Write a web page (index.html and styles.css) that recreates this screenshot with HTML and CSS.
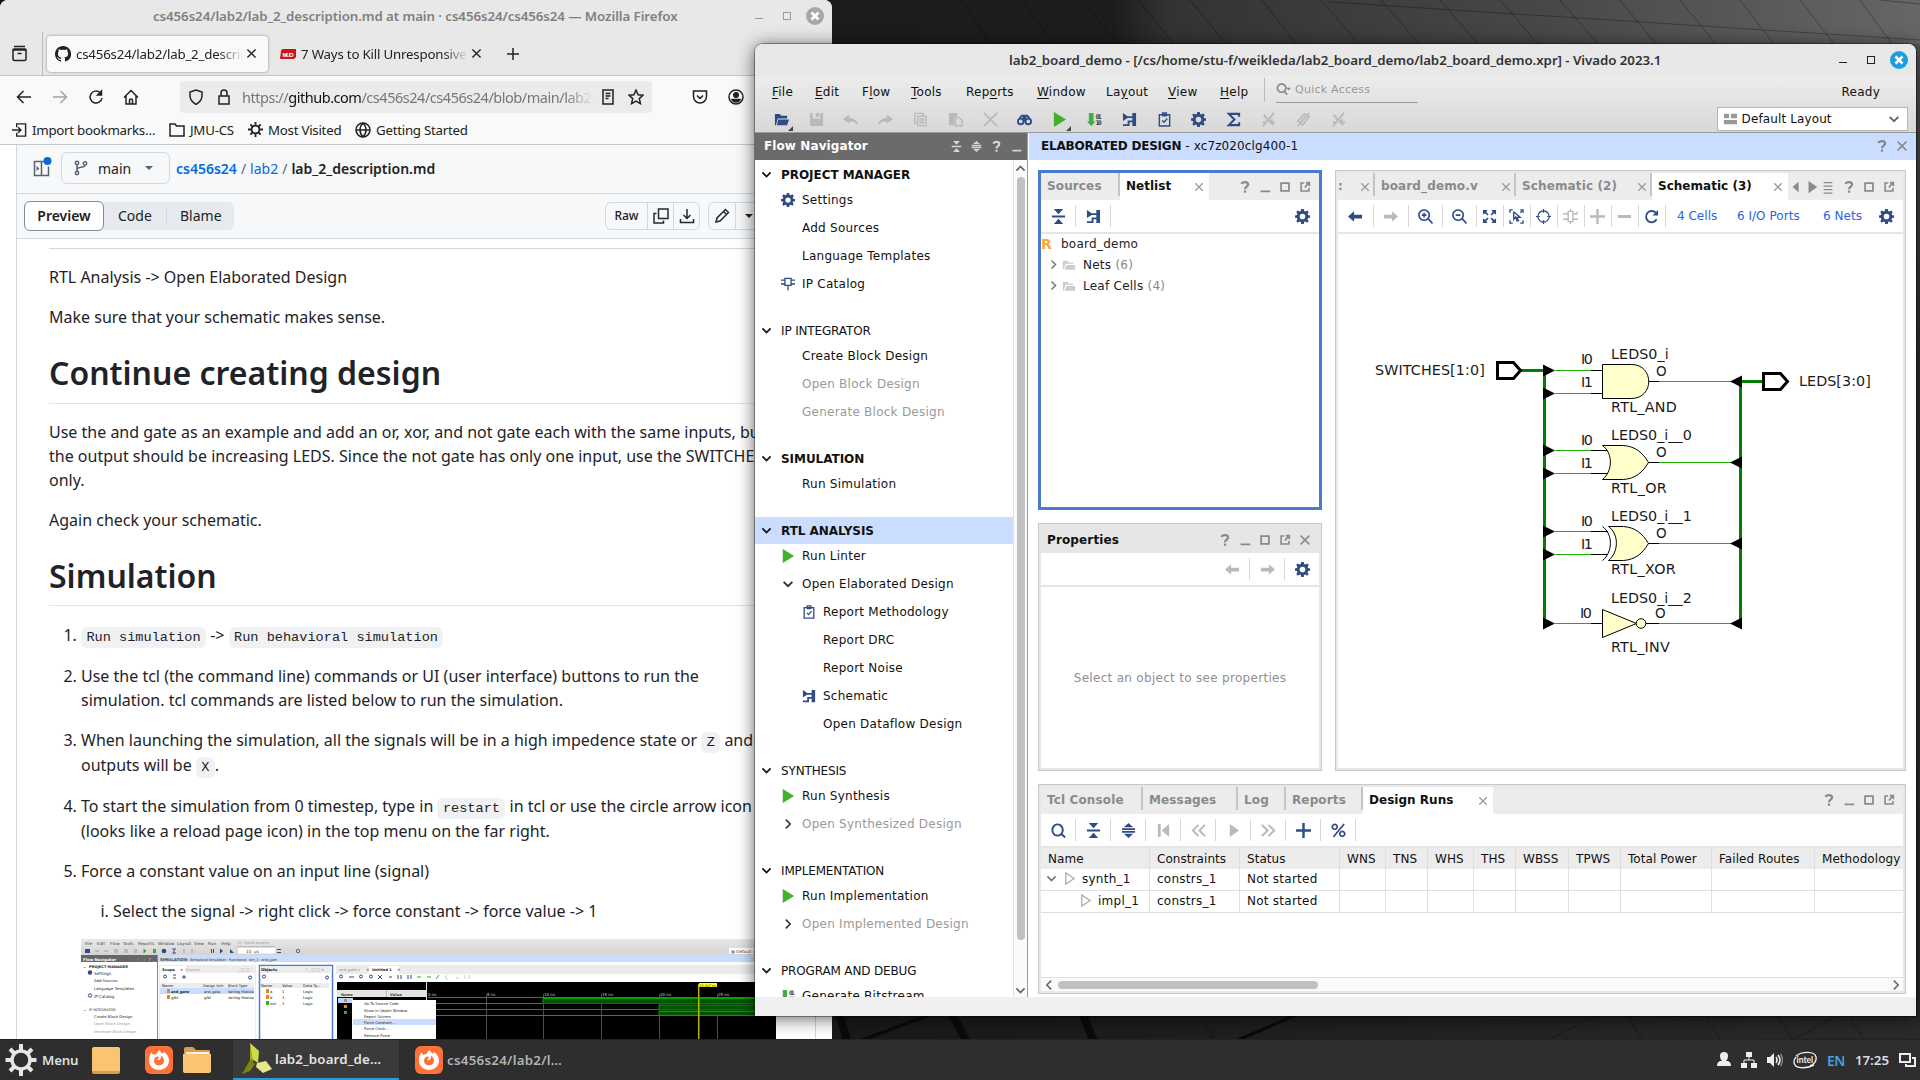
FILE: index.html
```html
<!DOCTYPE html>
<html lang="en">
<head>
<meta charset="utf-8">
<title>Desktop</title>
<link rel="stylesheet" href="styles.css">
</head>
<body>
<svg class="defs" aria-hidden="true">
  <symbol id="gear" viewBox="0 0 16 16"><path fill="currentColor" fill-rule="evenodd" d="M6.6 0h2.8l.4 2.2 1.3.5L13 1.500l1.700 1.800-1.300 1.900.5 1.300 2.100.3v2.500l-2.100.4-.5 1.400 1.200 1.800-1.700 1.700-1.900-1.200-1.300.5L9.400 16H6.600l-.4-2.100-1.300-.5L3 14.600l-1.700-1.700 1.200-1.800L2 9.700l-2-.4V6.800l2-.3.6-1.300-1.300-1.900L3 1.500l1.900 1.200 1.300-.5zM8 5a3 3 0 1 0 0 6 3 3 0 0 0 0-6z"/></symbol>
  <symbol id="open" viewBox="0 0 16 16"><path fill="currentColor" d="M1 2h5l2 2h6v3H4L2 14H1zM4.500 8H16l-2 6H3z"/></symbol>
  <symbol id="save" viewBox="0 0 16 16"><path fill="currentColor" d="M1 1h3v6h8V1h3v14H1zM7 1h4v4H7z"/></symbol>
  <symbol id="undo" viewBox="0 0 16 16"><path fill="currentColor" d="M0 7.500 6.500 3v3C12 6 15 9 16 14c-3-3-5-4-9.500-4v2.500z"/></symbol>
  <symbol id="redo" viewBox="0 0 16 16"><path fill="currentColor" d="M16 7.500 9.500 3v3C4 6 1 9 0 14c3-3 5-4 9.500-4v2.500z"/></symbol>
  <symbol id="copydoc" viewBox="0 0 16 16"><path fill="none" stroke="currentColor" stroke-width="1.500" d="M4 12H2V1.500h9V4M5 4.500h9v10H5zM7 7.500h5M7 9.500h5M7 11.500h5"/></symbol>
  <symbol id="paste" viewBox="0 0 16 16"><path fill="currentColor" d="M1 1h9v4H7v9H1z"/><path fill="none" stroke="currentColor" stroke-width="1.500" d="M8 6h4l3 3v6H8z"/></symbol>
  <symbol id="xbig" viewBox="0 0 16 16"><path fill="none" stroke="currentColor" stroke-width="2" d="M1 1l14 14M15 1 1 15"/></symbol>
  <symbol id="binoc" viewBox="0 0 16 16"><g fill="none" stroke="currentColor" stroke-width="2"><circle cx="4" cy="10" r="3"/><circle cx="12" cy="10" r="3"/><path d="M2.500 7 5 4h2v6M13.500 7 11 4H9v6"/></g></symbol>
  <symbol id="play" viewBox="0 0 16 16"><path fill="#41b12c" d="M2 0v16l13-8z"/></symbol>
  <symbol id="bits" viewBox="0 0 16 16"><path fill="#3fae49" d="M2 1h5v9h2l-4.500 5L0 10h2z"/><text x="9" y="7" font-family="DejaVu Sans Mono" font-size="7" font-weight="700" textLength="7" fill="#444">01</text><text x="9" y="14" font-family="DejaVu Sans Mono" font-size="7" font-weight="700" textLength="7" fill="#444">10</text></symbol>
  <symbol id="schem" viewBox="0 0 16 16"><path fill="currentColor" d="M1 1l5 3.500h5V1h4v14h-4v-4H8v4H1v-2h5V9h5V6.500H6L1 9.500z"/></symbol>
  <symbol id="clip" viewBox="0 0 16 16"><path fill="none" stroke="currentColor" stroke-width="1.500" d="M2.500 3h11v12h-11zM6 1h4v3H6z"/><path fill="none" stroke="currentColor" stroke-width="1.500" d="M5.500 9l2 2 3.500-4"/></symbol>
  <symbol id="sigma" viewBox="0 0 16 16"><path fill="none" stroke="currentColor" stroke-width="2.200" d="M14 5V2H3l6 6-6 6h11v-3"/></symbol>
  <symbol id="off" viewBox="0 0 16 16"><path fill="none" stroke="currentColor" stroke-width="2.200" d="M14 1 2 15M3 3l4 5M9 9l4 5M2 11h4M12 8l-2 3h5"/></symbol>
  <symbol id="clips" viewBox="0 0 16 16"><path fill="none" stroke="currentColor" stroke-width="1.700" d="M14 1 2 15M2 10 9 2l5 3-7 9zM5 11l5-6"/></symbol>
  <symbol id="collapse" viewBox="0 0 16 16"><path fill="currentColor" d="M3 0h10L8 5.500zM1 7h14v2H1zM3 16h10l-5-5.500z"/></symbol>
  <symbol id="expand" viewBox="0 0 16 16"><path fill="currentColor" d="M8 0l5 4.500H3zM1 5.500h14v2H1zM1 8.500h14v2H1zM3 11.500h10L8 16z"/></symbol>
  <symbol id="help" viewBox="0 0 16 16"><path fill="none" stroke="currentColor" stroke-width="2.600" d="M4 4.500C5 1.500 11.500 1.500 11.500 5 11.500 7.500 8 7.500 8 10.500M8 12v2.500"/></symbol>
  <symbol id="min" viewBox="0 0 16 16"><path fill="currentColor" d="M3 12h11v2H3z"/></symbol>
  <symbol id="max" viewBox="0 0 16 16"><path fill="none" stroke="currentColor" stroke-width="2" d="M3.500 3.500h9v9h-9z"/></symbol>
  <symbol id="float" viewBox="0 0 16 16"><path fill="none" stroke="currentColor" stroke-width="1.800" d="M7 3.500H3.500v9h9V9M8 8.500l4-5M9 3h4v4"/></symbol>
  <symbol id="close" viewBox="0 0 16 16"><path fill="none" stroke="currentColor" stroke-width="1.700" d="M3 3l10 10M13 3 3 13"/></symbol>
  <symbol id="arrL" viewBox="0 0 16 16"><path fill="currentColor" d="M0 8l6.500-5.500V6H15v4H6.500v3.500z"/></symbol>
  <symbol id="arrR" viewBox="0 0 16 16"><path fill="currentColor" d="M16 8 9.500 2.500V6H1v4h8.500v3.500z"/></symbol>
  <symbol id="chevD" viewBox="0 0 16 16"><path fill="none" stroke="currentColor" stroke-width="2.200" d="M3 5.500l5 5 5-5"/></symbol>
  <symbol id="chevR" viewBox="0 0 16 16"><path fill="none" stroke="currentColor" stroke-width="1.800" d="M5.500 3l5 5-5 5"/></symbol>
  <symbol id="chip" viewBox="0 0 16 16"><path fill="none" stroke="currentColor" stroke-width="1.500" d="M4.500 1.500h7v8h-7zM0 3.500h4M12 3.500h4M0 8h4M12 8h4M8 10v5"/></symbol>
  <symbol id="folderO" viewBox="0 0 16 16"><path fill="currentColor" d="M1 3h5l1.500 2H13v1.500H4L2 13H1zM5 8h10v5.500H3z"/></symbol>
  <symbol id="zin" viewBox="0 0 16 16"><path fill="none" stroke="currentColor" stroke-width="1.700" d="M6.500 1a5.500 5.500 0 1 0 .01 0M11 10.500l4.500 5M4 6.500h5M6.500 4v5"/></symbol>
  <symbol id="zout" viewBox="0 0 16 16"><path fill="none" stroke="currentColor" stroke-width="1.700" d="M6.500 1a5.500 5.500 0 1 0 .01 0M11 10.500l4.500 5M4 6.500h5"/></symbol>
  <symbol id="mag" viewBox="0 0 16 16"><path fill="none" stroke="currentColor" stroke-width="2" d="M7 1.500a5.500 6 0 1 0 .01 0M11 11.500l4 4"/></symbol>
  <symbol id="fit" viewBox="0 0 16 16"><path fill="currentColor" d="M1 1h5L4.500 3l2.500 3-1 1-3-2.500L1 6zM15 1v5l-2-1.500L10 7 9 6l2.500-3L10 1zM1 15v-5l2 1.500L6 9l1 1-2.500 3L6 15zM15 15h-5l1.500-2L9 10l1-1 3 2.500 2-1.500z"/></symbol>
  <symbol id="selz" viewBox="0 0 16 16"><path fill="none" stroke="currentColor" stroke-width="1.400" d="M1 4V1h3M12 1h3v3M15 12v3h-3M4 15H1v-3M5 3l7 6H8.500l2 4M5 3v8l2-2.500 2 5M12 4l2-2"/></symbol>
  <symbol id="target" viewBox="0 0 16 16"><path fill="none" stroke="currentColor" stroke-width="1.300" d="M8 2a6 6 0 1 0 .01 0M8 0v4M8 12v4M0 8h4M12 8h4"/></symbol>
  <symbol id="chip2" viewBox="0 0 16 16"><path fill="none" stroke="currentColor" stroke-width="1.500" d="M5.500 2.500h5v11h-5zM0 5h5M11 5h4V3M0 11h5M11 11h5M8 0v2M8 14v2"/></symbol>
  <symbol id="plus" viewBox="0 0 16 16"><path fill="none" stroke="currentColor" stroke-width="2.600" d="M8 0v16M0 8h16"/></symbol>
  <symbol id="minus" viewBox="0 0 16 16"><path fill="none" stroke="currentColor" stroke-width="3" d="M1 8h14"/></symbol>
  <symbol id="reload" viewBox="0 0 16 16"><path fill="none" stroke="currentColor" stroke-width="2" d="M13.500 11A6 6 0 1 1 13 4.500"/><path fill="currentColor" d="M15 1v6H9z"/></symbol>
  <symbol id="lines" viewBox="0 0 16 16"><path fill="none" stroke="currentColor" stroke-width="1.700" d="M3 3h10M3 7h10M3 11h10M3 15h10"/></symbol>
  <symbol id="triL" viewBox="0 0 16 16"><path fill="currentColor" d="M11 2v12L4 8z"/></symbol>
  <symbol id="triR" viewBox="0 0 16 16"><path fill="currentColor" d="M4 1v14l10-7z"/></symbol>
  <symbol id="first" viewBox="0 0 16 16"><path fill="currentColor" d="M2 1h3v14H2zM14 1v14L6 8z"/></symbol>
  <symbol id="rew" viewBox="0 0 16 16"><path fill="none" stroke="currentColor" stroke-width="2.200" d="M8 2 2 8l6 6M15 2 9 8l6 6"/></symbol>
  <symbol id="fwd" viewBox="0 0 16 16"><path fill="none" stroke="currentColor" stroke-width="2.200" d="M1 2l6 6-6 6M8 2l6 6-6 6"/></symbol>
  <symbol id="triO" viewBox="0 0 16 16"><path fill="none" stroke="currentColor" stroke-width="1.300" d="M4 2v12l9-6z"/></symbol>
  <symbol id="pct" viewBox="0 0 16 16"><path fill="none" stroke="currentColor" stroke-width="1.800" d="M14 1 2.500 15M4 1.500a2.600 2.600 0 1 0 .01 0M12 9a2.600 2.600 0 1 0 .01 0"/></symbol>
  <symbol id="layout" viewBox="0 0 16 16"><path fill="currentColor" d="M1 2h6v5H1zM9 2h7v5H9zM1 9h15v5H1z"/></symbol>
  <symbol id="ff" viewBox="0 0 28 28"><rect width="28" height="28" rx="6" fill="#ff7139"/><path fill="#fff" fill-rule="evenodd" d="M4 14.500c0-3 .7-5.500 2.300-8L8.500 9c1-.8 2-1 3-1 .8-1.800 2-3.200 3.500-4 .2 1.800 1.500 3 3.500 4V5.500c3.500 2.300 5.500 5.500 5.500 9 0 5.500-4.500 9.500-10 9.500S4 20 4 14.500zM13 10.500c-2 0-4 1.500-4 4.300 0 2.700 2.200 4.700 5 4.700s5-2 5-4.700c0-2.500-1.500-4.300-3.500-5.300.8 1.500.5 3-.5 4-1 .8-2.500.6-3-.2 1-.3 1.500-.8 2-1.500z"/></symbol>
  <symbol id="file" viewBox="0 0 28 28"><path fill="#dd9c49" d="M1 3q0-2 2-2h7l3 3h13q1 0 1 2v4H1z"/><path fill="#f4f4f0" d="M3 6h23v4H3z"/><path fill="#f9c573" d="M0 8h28v17q0 2-2 2H2q-2 0-2-2z"/></symbol>
</svg>

<div class="desktop">
  <svg class="wallpaper" viewBox="0 0 1920 1080">
    <defs>
      <linearGradient id="wg" x1="0" x2="1"><stop offset="0" stop-color="#141414"/><stop offset=".54" stop-color="#1d1d1d"/><stop offset=".58" stop-color="#1d1d1d"/><stop offset=".61" stop-color="#333"/><stop offset=".8" stop-color="#474747"/><stop offset="1" stop-color="#666"/></linearGradient>
      <linearGradient id="wb" x1="0" y1="0" x2="0" y2="1"><stop offset="0" stop-color="#555"/><stop offset=".3" stop-color="#2f2f30"/><stop offset="1" stop-color="#2b2b2b"/></linearGradient>
      <linearGradient id="wf" x1="0" x2="1"><stop offset="0" stop-color="#161616"/><stop offset=".5" stop-color="#1a1a1a"/><stop offset="1" stop-color="#2a2a2a"/></linearGradient>
    </defs>
    <rect width="1920" height="60" fill="url(#wg)"/>
    <rect x="1900" y="44" width="20" height="1000" fill="url(#wb)"/>
    <rect x="0" y="1010" width="1920" height="40" fill="url(#wf)"/>
    <g stroke="#000" stroke-opacity=".3" fill="none"><path d="M961 0l30 44M1022 0l32 44M1083 0l34 44M1138 0l36 44M1190 0l36 44M1262 0l34 44M1321 0l38 44M1381 0l38 44M1440 0l38 44M1500 0l38 44M1560 0l38 44M1620 0l36 44M1680 0l36 44M1740 0l34 44M1800 0l34 44M1860 0l32 44M1330 2 1920 40M1880 0l40 4"/><path d="M1549 1039l48-24M1794 1039l45-24M1628 1016l14 24M1705 1016l15 24M1777 1016l16 24M1849 1016l15 24M1200 1016l14 24"/></g>
    <g stroke="#0a0a0a" fill="none" stroke-width="8"><path d="M838 1010l10 34M950 1010l18 34M1081 1010l14 34"/><path stroke-width="3" d="M862 1040l70-26M1238 1040l60-26"/></g>
  </svg>

  <section class="win firefox">
    <header class="ff-title"><span class="t">cs456s24/lab2/lab_2_description.md at main · cs456s24/cs456s24 — Mozilla Firefox</span>
      <span class="ctl"><i class="mn"></i><i class="mx"></i><svg width="18" height="18" viewBox="0 0 18 18"><circle cx="9" cy="9" r="9" fill="#a8a8a8"/><path d="M5.500 5.500l7 7M12.500 5.500l-7 7" stroke="#fff" stroke-width="2.600"/></svg></span>
    </header>
    <div class="ff-tabs">
      <span class="view"><svg width="17" height="17" viewBox="0 0 17 17" fill="none" stroke="#222" stroke-width="1.500"><path d="M3 1.500h11M2 5h13v9q0 1.500-1.500 1.500h-10Q2 15.500 2 14zM2 5q0-1 1-1h11q1 0 1 1M6.500 8.500h4"/></svg></span>
      <div class="tab on"><svg width="16" height="16" viewBox="0 0 16 16"><path fill="#222" d="M8 0C3.600 0 0 3.600 0 8c0 3.500 2.300 6.500 5.500 7.600.4.100.5-.2.500-.4v-1.400c-2.200.5-2.700-1-2.700-1-.4-.9-.9-1.200-.9-1.200-.7-.5.1-.5.1-.5.800.1 1.200.8 1.200.8.700 1.200 1.900.9 2.300.7.100-.5.300-.9.500-1.100-1.800-.2-3.600-.9-3.600-4 0-.9.300-1.600.8-2.100-.1-.200-.4-1 .1-2.100 0 0 .7-.2 2.200.8a7.500 7.500 0 0 1 4 0c1.500-1 2.200-.8 2.200-.8.400 1.100.2 1.900.1 2.100.5.600.8 1.300.8 2.100 0 3.100-1.900 3.700-3.700 3.900.3.300.6.800.6 1.500v2.300c0 .2.100.5.600.4A8 8 0 0 0 8 0z"/></svg><span class="lab">cs456s24/lab2/lab_2_descrip</span><svg class="x" width="13" height="13"><use href="#close"/></svg></div>
      <div class="tab two"><svg width="16" height="10" viewBox="0 0 16 10"><path fill="#d01317" d="M1 2q0-2 2-2h13v8l-2 2H0z"/><text x="2.500" y="7.500" font-size="6" font-weight="700" font-family="Liberation Sans" textLength="11" fill="#fff">MUO</text></svg><span class="lab">7 Ways to Kill Unresponsive</span><svg class="x" width="13" height="13"><use href="#close"/></svg></div>
      <svg class="newtab" width="14" height="14" viewBox="0 0 14 14"><path stroke="#222" stroke-width="1.500" d="M7 1v12M1 7h12"/></svg>
    </div>
    <div class="ff-nav">
      <svg class="a1" width="16" height="16" viewBox="0 0 16 16"><path d="M15 8H1.500M7.500 2l-6 6 6 6" /></svg>
      <svg class="a2" width="16" height="16" viewBox="0 0 16 16"><path d="M1 8h13.500M8.500 2l6 6-6 6" /></svg>
      <svg class="a3" width="16" height="16" viewBox="0 0 16 16"><path d="M14 9a6 6 0 1 1-2-5.500"/><path d="M13.500 2v4H9.500z" fill="#222"/></svg>
      <svg class="a4" width="16" height="16" viewBox="0 0 16 16"><path d="M1 8.500l7-7 7 7M3 7v8h10V7M6.500 15v-4q0-1 1.500-1t1.500 1v4"/></svg>
      <div class="url">
        <svg width="16" height="16" viewBox="0 0 16 16"><path d="M8 1l6 2v4c0 4-2 6-6 8.500C4 13 2 11 2 7V3z"/></svg>
        <svg width="16" height="16" viewBox="0 0 16 16"><path d="M3 7h10v8H3zM5 7V4c0-4 6-4 6 0v3"/></svg>
        <span class="u">https://<b>github.com</b>/cs456s24/cs456s24/blob/main/lab2/</span>
        <svg width="16" height="16" viewBox="0 0 16 16"><path d="M3 1h10v14H3zM5.500 4.500h5M5.500 7h5M5.500 9.500h3"/></svg>
        <svg width="16" height="16" viewBox="0 0 16 16"><path d="M8 1l2.100 4.700 4.900.5-3.700 3.400 1.100 5L8 12l-4.400 2.600 1.100-5L1 6.200l4.900-.5z"/></svg>
      </div>
      <svg class="a5" width="16" height="16" viewBox="0 0 16 16"><path d="M1.500 2h13v5.500a6.500 6.500 0 0 1-13 0zM5 6.500l3 3 3-3"/></svg>
      <svg class="a6" width="16" height="16" viewBox="0 0 16 16"><circle cx="8" cy="8" r="7"/><circle cx="8" cy="6" r="2.300" fill="#222"/><path fill="#222" d="M4 10.500h8Q11 13 8 13t-4-2.500z"/></svg>
    </div>
    <div class="ff-book">
      <span><svg width="15" height="16" viewBox="0 0 16 16"><path d="M5 5V1.500h9.500v13H5V11M0 8h9M6.500 5l3 3-3 3"/></svg>Import bookmarks…</span>
      <span><svg width="16" height="16" viewBox="0 0 16 16"><path d="M1 14V2h5l1.500 2H15v10z"/></svg>JMU-CS</span>
      <span><svg width="15" height="15" viewBox="0 0 16 16"><circle cx="8" cy="8" r="4.200" stroke-width="2"/><path stroke-width="2" d="M8 0v3M8 13v3M0 8h3M13 8h3M2.500 2.500l2 2M11.500 11.500l2 2M13.500 2.500l-2 2M4.500 11.500l-2 2"/></svg>Most Visited</span>
      <span><svg width="16" height="16" viewBox="0 0 16 16"><circle cx="8" cy="8" r="7"/><path d="M1 8h14M8 1C4 5 4 11 8 15M8 1c4 4 4 10 0 14"/></svg>Getting Started</span>
    </div>
    <div class="page">
      <div class="gh">
        <div class="gh-path">
          <svg class="side" width="19" height="22" viewBox="0 0 19 22" fill="none" stroke="#59636e" stroke-width="1.500"><path d="M12 4.500H1.500v14h14v-9M8.500 4v15"/><path d="M3.500 9l3 2.500-3 2.500z" fill="#59636e" stroke="none"/><circle cx="14.500" cy="4" r="4" fill="#0969da" stroke="none"/></svg>
          <span class="branch"><svg width="16" height="16" viewBox="0 0 16 16" fill="none" stroke="#59636e" stroke-width="1.500"><circle cx="4" cy="3" r="1.700"/><circle cx="4" cy="13" r="1.700"/><circle cx="12" cy="3.500" r="1.700"/><path d="M4 5v6M12 5.500c0 2.500-8 1-8 4"/></svg>main<i class="dn"></i></span>
          <span class="crumb"><b>cs456s24</b><i>/</i><a>lab2</a><i>/</i><strong>lab_2_description.md</strong></span>
        </div>
        <div class="gh-bar">
          <div class="seg"><b>Preview</b><span class="cd">Code</span><span class="bl">Blame</span></div>
          <div class="btns"><span class="raw">Raw</span><span><svg width="16" height="16" viewBox="0 0 16 16"><path d="M5.500 1h9.500v9.500H5.500zM3.500 5.500H1V15h9.500v-2.500"/></svg></span><span><svg width="16" height="16" viewBox="0 0 16 16"><path d="M8 1v9M4.500 7 8 10.500 11.500 7M1.500 11v3.500h13V11"/></svg></span></div>
          <div class="btns b2"><span><svg width="16" height="16" viewBox="0 0 16 16"><path d="M2 14l1-4 8.500-8.500 3 3L6 13zM9.500 3.500l3 3"/></svg></span><span class="w"><i class="dn"></i></span></div>
        </div>
        <article class="md">
          <hr>
          <p>RTL Analysis -&gt; Open Elaborated Design</p>
          <p>Make sure that your schematic makes sense.</p>
          <h1>Continue creating design</h1>
          <p class="wide">Use the and gate as an example and add an or, xor, and not gate each with the same inputs, but<br>the output should be increasing LEDS. Since the not gate has only one input, use the SWITCHES[0]<br>only.</p>
          <p>Again check your schematic.</p>
          <h1>Simulation</h1>
          <ol>
            <li><p class="one"><code>Run simulation</code> -&gt; <code>Run behavioral simulation</code></p></li>
            <li><p>Use the tcl (the command line) commands or UI (user interface) buttons to run the<br>simulation. tcl commands are listed below to run the simulation.</p></li>
            <li><p class="c2">When launching the simulation, all the signals will be in a high impedence state or <code>Z</code> and<br>outputs will be <code>X</code>.</p></li>
            <li><p class="c2">To start the simulation from 0 timestep, type in <code>restart</code> in tcl or use the circle arrow icon<br>(looks like a reload page icon) in the top menu on the far right.</p></li>
            <li><p>Force a constant value on an input line (signal)</p>
              <ol class="rom"><li><p>Select the signal -&gt; right click -&gt; force constant -&gt; force value -&gt; 1</p></li></ol>
              <svg class="shot" width="695" height="101" viewBox="81 939 695 101" font-family="DejaVu Sans" font-size="4.200" fill="#444">
                <defs><linearGradient id="tb" x1="0" y1="0" x2="0" y2="1"><stop offset="0" stop-color="#e8e8e8"/><stop offset="1" stop-color="#d4d4d4"/></linearGradient></defs>
                <rect x="81" y="939" width="695" height="101" fill="#fff"/>
                <rect x="81" y="939" width="695" height="16" fill="url(#tb)"/>
                <text x="85" y="945">File</text><text x="97" y="945">Edit</text><text x="110" y="945">Flow</text><text x="123" y="945">Tools</text><text x="138" y="945">Reports</text><text x="158" y="945">Window</text><text x="177" y="945">Layout</text><text x="194" y="945">View</text><text x="208" y="945">Run</text><text x="221" y="945">Help</text><text x="238" y="944" fill="#999" font-size="3.800">Q- Quick Access</text><path stroke="#999" stroke-width=".5" d="M237 946.500h38"/>
                <g fill="#2d4a85"><rect x="85" y="949" width="5" height="4"/><circle cx="164" cy="951" r="2.300"/><path d="M172 948.500h4v1h-2.500l1.500 1.500-1.500 1.500h2.500v1h-4l2-2.500zM211 949h1v4h-1zM213 949h1v4h-1zM220 948.500v5l3-2.500zM230 949l4 4h-4zM277 949h4v1h-4zM277 952h4v1h-4z"/></g>
                <path fill="#3a3" d="M143.500 948.500v5l3-2.500zM153 949h3v4h-3z"/><g fill="#bbb"><path d="M95 950h4v2h-4zM104 950h4v2h-4zM114 949h4v4h-4zM124 949h4v4h-4zM134 949h3v4h-3zM183 949h2v4h-2zM191 949h2v4h-2z"/></g>
                <rect x="238" y="948" width="37" height="5.500" fill="#fff"/><text x="246" y="952.500">10</text><text x="254" y="952.500">us</text>
                <circle cx="298" cy="951" r="1.700" fill="none" stroke="#2d4a85" stroke-width=".8"/>
                <rect x="729" y="948" width="47" height="6" fill="#fff"/><text x="731" y="953">▤ Default Layout</text>
                <rect x="81" y="955" width="76" height="7" fill="#666"/><text x="83" y="960.500" fill="#fff" font-weight="700" font-size="3.900">Flow Navigator</text><text x="136" y="960.500" fill="#ddd" textLength="19">⋮ ⋮ ? _</text>
                <rect x="157" y="955" width="619" height="7" fill="#cbddff"/><text x="160" y="960.500" font-size="3.900" font-weight="700">SIMULATION</text><text x="188" y="960.500" font-size="3.800" textLength="89">- Behavioral Simulation - Functional - sim_1 - and_gate</text>
                <path stroke="#888" d="M157.500 955v85"/>
                <g fill="#222"><text x="83" y="968">⌄</text><text x="89" y="968" font-weight="700" font-size="3.600">PROJECT MANAGER</text><text x="94" y="974.500">Settings</text><text x="94" y="982" font-size="3.800">Add Sources</text><text x="94" y="990" font-size="3.900">Language Templates</text><text x="94" y="997.500" font-size="4">IP Catalog</text><text x="83" y="1010.500">⌄</text><text x="89" y="1010.500" font-size="3.500">IP INTEGRATOR</text><text x="94" y="1017.500" font-size="3.800">Create Block Design</text><text x="94" y="1025" fill="#999" font-size="3.800">Open Block Design</text><text x="94" y="1032.500" fill="#999" font-size="3.700">Generate Block Design</text></g>
                <circle cx="90" cy="972.500" r="2.200" fill="#2d4a85"/><circle cx="90" cy="995.500" r="1.700" fill="none" stroke="#2d4a85"/>
                <g fill="#ececec"><path d="M159 965h97v75h-97zM336 965h440v9H336z"/></g><path fill="#fff" d="M160 973h95v67h-95zM160 966h26v8h-26zM369 966h30v9h-30z"/>
                <path fill="#fff" stroke="#4a7bd0" stroke-width="1.500" d="M259.500 965.500h73v76h-73z"/><path fill="#ececec" d="M260 966h72v7h-72zM160 983h94v5h-94zM261 983h68v5h-68z"/><path fill="#cbddff" d="M160 988h94v6h-94z"/>
                <g fill="#222" font-size="3.800"><text x="162" y="971" font-weight="700">Scope</text><text x="180" y="971">×</text><text x="185" y="971" fill="#999">Sources</text><text x="238" y="971" fill="#888">_ □ □</text><text x="261" y="971" font-weight="700">Objects</text><text x="305" y="971" fill="#888">? _ □ □ ×</text><text x="162" y="987">Name</text><text x="203" y="987" font-size="3.500">Design Unit</text><text x="228" y="987" font-size="3.600">Block Type</text><text x="171" y="993" font-weight="700" font-size="3.500">and_gate</text><text x="204" y="993" font-size="3.500">and_gate</text><text x="228" y="993" font-size="3.500">Verilog Module</text><text x="171" y="999">glbl</text><text x="204" y="999">glbl</text><text x="228" y="999" font-size="3.500">Verilog Module</text><text x="261" y="987">Name</text><text x="282" y="987">Value</text><text x="303" y="987">Data Ty...</text><text x="270" y="993">a</text><text x="282" y="993">1</text><text x="303" y="993">Logic</text><text x="270" y="999">b</text><text x="282" y="999">1</text><text x="303" y="999">Logic</text><text x="270" y="1005">out</text><text x="282" y="1005">1</text><text x="303" y="1005">Logic</text></g>
                <path fill="#e8871e" d="M167 989h3v4h-3zM167 995h3v4h-3zM266 989h3v4h-3zM266 995h3v4h-3z"/><path fill="#3a3" d="M266 1001h3v4h-3z"/>
                <g fill="none" stroke="#2d4a85"><circle cx="165" cy="976.500" r="1.500"/><path d="M173 975h3M173 978h3M184 975v4M182 977h4"/><circle cx="250" cy="977.500" r="1.500"/><circle cx="264" cy="976.500" r="1.500"/><circle cx="327" cy="977.500" r="1.500"/><circle cx="341" cy="976.500" r="1.500"/><circle cx="361" cy="976.500" r="1.500"/><circle cx="371" cy="976.500" r="1.500"/><path d="M349 977h5M378 975l4 4M382 975l-4 4M389 977h3M398 975v4M401 975v4M408 975v4M411 975v4"/><path stroke="#3a3" d="M417 977h4M427 977h4M436 979l3-4"/><path stroke="#ccc" d="M446 975v4h2M456 978h3M465 975v4M469 975v4"/></g>
                <text x="339" y="971" fill="#888" font-size="3.800">and_gate.v</text><text x="366" y="971">×</text><text x="372" y="971" fill="#222" font-weight="700" font-size="3.500">Untitled 1</text><text x="397" y="971">×</text>
                <path d="M337 982h439v58H337z" fill="#000"/><path fill="#e4e4e4" d="M337 990h89v7h-89z"/><path fill="#b8d4ff" d="M338 998h15v5h-15z"/><path stroke="#ddd" d="M426.500 982v18"/>
                <text x="341" y="995.500" font-weight="700" font-size="3.600">Name</text><text x="390" y="995.500" font-weight="700" font-size="3.800">Value</text><path stroke="#bbb" d="M386.500 990v7"/>
                <path fill="#e8871e" d="M344 999h3v3h-3zM344 1005h3v3h-3z"/><path fill="#3a3" d="M344 1011h3v3h-3z"/>
                <path stroke="#4b4b4b" d="M486.500 994v46M543.500 994v46M601.500 994v46M659.500 994v46M717.500 994v46"/><path stroke="#777" stroke-width=".8" d="M428 997.500h348"/>
                <path fill="#005400" d="M543 999h233v5H543zM659 1005h117v11H659z"/><path fill="none" stroke="#00a400" d="M436 1003.500h107v-5h233M436 1009.500h223v-4.500h117M436 1015.500h223v-4h117M659 1015.500h117" /><path stroke="#008000" stroke-width=".8" d="M543.500 1003.500h233M659 1009.500h117"/>
                <g fill="#ccc" font-size="4"><text x="428" y="996">0 ns</text><text x="487" y="996">5 ns</text><text x="544" y="996">10 ns</text><text x="602" y="996">15 ns</text><text x="660" y="996">20 ns</text><text x="718" y="996">25 ns</text></g>
                <path stroke="#b5b500" stroke-width="1.500" d="M698.700 984v56"/><path fill="#ff0" d="M699 983h18v4h-18z"/><text x="699.500" y="986.500" font-size="3.300">23.407 ns</text>
                <path fill="#fff" d="M352 1000h84v40h-84z"/><path fill="#cbddff" d="M353 1019h83v6h-83z"/>
                <g fill="#222" font-size="3.700"><text x="364" y="1005">Go To Source Code</text><text x="364" y="1011.500">Show in Object Window</text><text x="364" y="1017.500">Report Drivers</text><text x="364" y="1024">Force Constant...</text><text x="364" y="1030">Force Clock...</text><text x="364" y="1036.500">Remove Force</text></g>
              </svg>
            </li>
          </ol>
        </article>
      </div>
    </div>
  </section>

  <section class="win vivado">
    <header class="v-title"><span>lab2_board_demo - [/cs/home/stu-f/weikleda/lab2_board_demo/lab2_board_demo.xpr] - Vivado 2023.1</span>
      <span class="ctl"><i class="mn"></i><i class="mx"></i><svg width="18" height="18" viewBox="0 0 18 18"><circle cx="9" cy="9" r="9" fill="#1f9ede"/><path d="M5.500 5.500l7 7M12.500 5.500l-7 7" stroke="#fff" stroke-width="2.600"/></svg></span>
    </header>
    <div class="v-head">
      <nav class="v-menu"><span><u>F</u>ile</span><span><u>E</u>dit</span><span>F<u>l</u>ow</span><span><u>T</u>ools</span><span>Rep<u>o</u>rts</span><span><u>W</u>indow</span><span>La<u>y</u>out</span><span><u>V</u>iew</span><span><u>H</u>elp</span>
        <div class="qa"><svg width="15" height="15" viewBox="0 0 16 16"><path fill="none" stroke="#888" stroke-width="1.700" d="M6 2a4.500 4.500 0 1 0 .01 0M9 10l3 3.500"/><path fill="#888" d="M11 6h5l-2.500 3z"/></svg>Quick Access</div><em>Ready</em></nav>
      <div class="v-tools">
        <span class="dd"><svg><use href="#open"/></svg></span><span class="g"><svg><use href="#save"/></svg></span><span class="g"><svg><use href="#undo"/></svg></span><span class="g"><svg><use href="#redo"/></svg></span><span class="g"><svg><use href="#copydoc"/></svg></span><span class="g"><svg><use href="#paste"/></svg></span><span class="g"><svg><use href="#xbig"/></svg></span><span><svg><use href="#binoc"/></svg></span><span class="dd"><svg><use href="#play"/></svg></span><span><svg><use href="#bits"/></svg></span><span><svg><use href="#schem"/></svg></span><span><svg><use href="#clip"/></svg></span><span><svg><use href="#gear"/></svg></span><span><svg><use href="#sigma"/></svg></span><span class="g"><svg><use href="#off"/></svg></span><span class="g"><svg><use href="#clips"/></svg></span><span class="g"><svg><use href="#off"/></svg></span>
        <div class="combo"><svg width="14" height="14"><use href="#layout"/></svg>Default Layout<svg class="c" width="14" height="14"><use href="#chevD"/></svg></div>
      </div>
    </div>
    <div class="v-body">
      <aside class="nav">
        <h2>Flow Navigator<span><svg><use href="#collapse"/></svg><svg><use href="#expand"/></svg><svg><use href="#help"/></svg><svg><use href="#min"/></svg></span></h2>
        <div class="nav-row">
        <div class="nav-list">
          <div class="grp"><h3 class="b"><svg><use href="#chevD"/></svg>PROJECT MANAGER</h3><p><svg><use href="#gear"/></svg>Settings</p><p>Add Sources</p><p>Language Templates</p><p><svg><use href="#chip"/></svg>IP Catalog</p></div>
          <div class="grp"><h3><svg><use href="#chevD"/></svg>IP INTEGRATOR</h3><p>Create Block Design</p><p class="d">Open Block Design</p><p class="d">Generate Block Design</p></div>
          <div class="grp"><h3 class="b"><svg><use href="#chevD"/></svg>SIMULATION</h3><p>Run Simulation</p></div>
          <div class="grp"><h3 class="b sel"><svg><use href="#chevD"/></svg>RTL ANALYSIS</h3><p><svg><use href="#play"/></svg>Run Linter</p><p><svg class="k"><use href="#chevD"/></svg>Open Elaborated Design</p><p class="s"><svg><use href="#clip"/></svg>Report Methodology</p><p class="s">Report DRC</p><p class="s">Report Noise</p><p class="s"><svg><use href="#schem"/></svg>Schematic</p><p class="s">Open Dataflow Design</p></div>
          <div class="grp"><h3><svg><use href="#chevD"/></svg>SYNTHESIS</h3><p><svg><use href="#play"/></svg>Run Synthesis</p><p class="d"><svg class="k"><use href="#chevR"/></svg>Open Synthesized Design</p></div>
          <div class="grp"><h3><svg><use href="#chevD"/></svg>IMPLEMENTATION</h3><p><svg><use href="#play"/></svg>Run Implementation</p><p class="d"><svg class="k"><use href="#chevR"/></svg>Open Implemented Design</p></div>
          <div class="grp"><h3><svg><use href="#chevD"/></svg>PROGRAM AND DEBUG</h3><p><svg><use href="#bits"/></svg>Generate Bitstream</p></div>
        </div>
        <div class="vs"><svg class="up" width="13" height="13"><use href="#chevD"/></svg><i></i><svg width="13" height="13"><use href="#chevD"/></svg></div>
        </div>
      </aside>
      <main class="work">
        <h2><b>ELABORATED DESIGN</b>&nbsp;- xc7z020clg400-1<span><svg><use href="#help"/></svg><svg><use href="#close"/></svg></span></h2>
        <div class="panes">
          <div class="panel netlist">
            <div class="tabs"><span style="width:79px">Sources</span><span class="on" style="width:89px">Netlist<svg><use href="#close"/></svg></span><div class="pc"><svg><use href="#help"/></svg><svg><use href="#min"/></svg><svg><use href="#max"/></svg><svg><use href="#float"/></svg></div></div>
            <div class="bar"><span><svg><use href="#collapse"/></svg></span><span><svg><use href="#schem"/></svg></span><svg class="end"><use href="#gear"/></svg></div>
            <div class="tree"><p class="r"><b>R</b>board_demo</p><p><svg class="k"><use href="#chevR"/></svg><svg class="f"><use href="#folderO"/></svg>Nets&nbsp;<i>(6)</i></p><p><svg class="k"><use href="#chevR"/></svg><svg class="f"><use href="#folderO"/></svg>Leaf Cells&nbsp;<i>(4)</i></p></div>
          </div>
          <div class="panel props">
            <div class="tabs plain"><b>Properties</b><div class="pc"><svg><use href="#help"/></svg><svg><use href="#min"/></svg><svg><use href="#max"/></svg><svg><use href="#float"/></svg><svg><use href="#close"/></svg></div></div>
            <div class="bar right"><span class="g"><svg><use href="#arrL"/></svg></span><span class="g"><svg><use href="#arrR"/></svg></span><svg class="end"><use href="#gear"/></svg></div>
            <div class="msg">Select an object to see properties</div>
          </div>
          <div class="panel schematic">
            <div class="tabs"><span class="cut" style="width:37px">:<svg><use href="#close"/></svg></span><span style="width:141px">board_demo.v<svg><use href="#close"/></svg></span><span style="width:136px">Schematic (2)<svg><use href="#close"/></svg></span><span class="on" style="width:136px">Schematic (3)<svg><use href="#close"/></svg></span><div class="arr"><svg><use href="#triL"/></svg><svg><use href="#triR"/></svg><svg><use href="#lines"/></svg></div><div class="pc"><svg><use href="#help"/></svg><svg><use href="#max"/></svg><svg><use href="#float"/></svg></div></div>
            <div class="bar n"><span class="w1"><svg><use href="#arrL"/></svg></span><span class="w1 g"><svg><use href="#arrR"/></svg></span><span class="w1"><svg><use href="#zin"/></svg></span><span class="w2"><svg><use href="#zout"/></svg></span><span><svg><use href="#fit"/></svg></span><span><svg><use href="#selz"/></svg></span><span><svg><use href="#target"/></svg></span><span class="g"><svg><use href="#chip2"/></svg></span><span class="g"><svg><use href="#plus"/></svg></span><span class="g"><svg><use href="#minus"/></svg></span><span><svg><use href="#reload"/></svg></span><a>4 Cells</a><a>6 I/O Ports</a><a>6 Nets</a><svg class="end"><use href="#gear"/></svg></div>
            <svg class="sch" viewBox="1338 234 565 534" font-family="DejaVu Sans" font-size="14.300" fill="#1a1a1a">
              <g fill="none" stroke="#008000" stroke-width="3"><path d="M1521 370.500h24M1544.500 370v253M1740.500 381v242M1741 381.500h22"/></g>
              <path stroke="#1db100" d="M1555 370.500h36M1555 393.500h36M1555 450.500h36M1555 473.500h36M1555 531.500h36M1555 554.500h36M1555 623.500h36M1658 381.500h74M1658 462.500h74M1658 543.500h74M1658 623.500h74"/>
              <path stroke="#000" d="M1591 370.500h11M1591 393.500h11M1591 450.500h17M1591 473.500h17M1591 531.500h17M1591 554.500h17M1591 623.500h11M1648 381.500h11M1648 462.500h11M1648 543.500h11M1646 623.500h13"/>
              <path fill="#000" d="M1543 364.500v12l12-6zM1543 387.500v12l12-6zM1543 444.500v12l12-6zM1543 467.500v12l12-6zM1543 525.500v12l12-6zM1543 548.500v12l12-6zM1543 617.500v12l12-6zM1742 375.500v12l-12-6zM1742 456.500v12l-12-6zM1742 537.500v12l-12-6zM1742 617.500v12l-12-6z"/>
              <g fill="#fff" stroke="#000" stroke-width="3"><path d="M1497.500 362.500h16l7 8-7 8h-16zM1763.500 373.500h17l7 8-7 8h-17z"/></g>
              <g fill="#ffc" stroke="#000"><path d="M1602.500 364.500h29c23 0 23 34 0 34h-29zM1602.500 445.500h21c12 1 19 7 25 17-6 10-13 16-25 17h-21c10-8 11-26 0-34zM1608.500 526.500h15c12 1 19 7 25 17-6 10-13 16-25 17h-15c10-8 11-26 0-34zM1602.500 609.500v28l34-14z"/><path fill="none" d="M1602.500 526.500c11 8 10 26 0 34"/><circle cx="1641" cy="623.500" r="4.800"/></g>
              <text x="1375" y="375" textLength="110">SWITCHES[1:0]</text><text x="1799" y="386" textLength="72">LEDS[3:0]</text>
              <text x="1581" y="364" textLength="12">I0</text><text x="1581" y="387" textLength="12">I1</text><text x="1581" y="445" textLength="12">I0</text><text x="1581" y="468" textLength="12">I1</text><text x="1581" y="526" textLength="12">I0</text><text x="1581" y="549" textLength="12">I1</text><text x="1580" y="618" textLength="12">I0</text>
              <text x="1611" y="359" textLength="58">LEDS0_i</text><text x="1611" y="440" textLength="81">LEDS0_i__0</text><text x="1611" y="521" textLength="81">LEDS0_i__1</text><text x="1611" y="603" textLength="81">LEDS0_i__2</text>
              <text x="1656" y="375.500" font-size="13.500">O</text><text x="1656" y="456.500" font-size="13.500">O</text><text x="1656" y="537.500" font-size="13.500">O</text><text x="1655" y="618" font-size="13.500">O</text>
              <text x="1611" y="412" textLength="66">RTL_AND</text><text x="1611" y="493" textLength="56">RTL_OR</text><text x="1611" y="574" textLength="65">RTL_XOR</text><text x="1611" y="652" textLength="59">RTL_INV</text>
            </svg>
          </div>
          <div class="panel runs">
            <div class="tabs"><span style="width:102px">Tcl Console</span><span style="width:95px">Messages</span><span style="width:48px">Log</span><span style="width:77px">Reports</span><span class="on" style="width:130px">Design Runs<svg><use href="#close"/></svg></span><div class="pc"><svg><use href="#help"/></svg><svg><use href="#min"/></svg><svg><use href="#max"/></svg><svg><use href="#float"/></svg></div></div>
            <div class="bar"><span><svg><use href="#mag"/></svg></span><span><svg><use href="#collapse"/></svg></span><span><svg><use href="#expand"/></svg></span><span class="g"><svg><use href="#first"/></svg></span><span class="g"><svg><use href="#rew"/></svg></span><span class="g"><svg><use href="#triR"/></svg></span><span class="g"><svg><use href="#fwd"/></svg></span><span><svg><use href="#plus"/></svg></span><span><svg><use href="#pct"/></svg></span></div>
            <div class="tbl">
              <div class="tr h"><span>Name</span><span>Constraints</span><span>Status</span><span>WNS</span><span>TNS</span><span>WHS</span><span>THS</span><span>WBSS</span><span>TPWS</span><span>Total Power</span><span>Failed Routes</span><span>Methodology</span></div>
              <div class="tr"><span class="n1"><svg class="k"><use href="#chevD"/></svg><svg class="t"><use href="#triO"/></svg>synth_1</span><span>constrs_1</span><span>Not started</span><span></span><span></span><span></span><span></span><span></span><span></span><span></span><span></span><span></span></div>
              <div class="tr"><span class="n2"><svg class="t"><use href="#triO"/></svg>impl_1</span><span>constrs_1</span><span>Not started</span><span></span><span></span><span></span><span></span><span></span><span></span><span></span><span></span><span></span></div>
            </div>
            <div class="hs"><svg class="l" width="16" height="14"><use href="#chevR"/></svg><i></i><svg class="rr" width="14" height="14"><use href="#chevR"/></svg></div>
          </div>
        </div>
      </main>
    </div>
    <footer class="v-status"></footer>
  </section>

  <footer class="taskbar">
    <div class="menu"><svg width="34" height="32" viewBox="0 0 34 32"><g fill="none" stroke="#e6e6e6"><circle cx="17" cy="16" r="9" stroke-width="3.500"/><path stroke-width="4" d="M17 0v6M17 26v6M1.500 16h6M26.500 16h6M6 5l5 5M28 5l-5 5M6 27l5-5M28 27l-5-5"/></g></svg>Menu</div>
    <i class="yel"></i>
    <svg class="q1" width="28" height="28"><use href="#ff"/></svg>
    <svg class="q2" width="28" height="28"><use href="#file"/></svg>
    <div class="task on"><svg width="32" height="32" viewBox="0 0 32 32"><path fill="#cfd94b" d="M9 0l9 8-1 12-6-4z"/><path fill="#7d8410" d="M9 17 1 31l8-3 5-7z"/><path fill="#e6e88c" d="M16 20l9-2 6 8-9 4-7-6z"/><path fill="#a0a81c" d="M9 0v17l3 2z"/></svg><span>lab2_board_de…</span></div>
    <div class="task two"><svg width="28" height="28"><use href="#ff"/></svg><span>cs456s24/lab2/l…</span></div>
    <div class="tray">
      <svg width="14" height="16" viewBox="0 0 14 16"><path fill="#eee" d="M7 0a4 4 0 0 1 4 4c0 2-1 4-2 5h2q3 1 3 5H0q0-4 3-5h2C4 8 3 6 3 4a4 4 0 0 1 4-4z"/></svg>
      <svg width="16" height="16" viewBox="0 0 16 16"><path fill="#eee" d="M5 0h6v5H5zM0 11h6v5H0zM10 11h6v5h-6z"/><path stroke="#eee" fill="none" d="M8 5v3M3 11V8h10v3"/></svg>
      <svg width="16" height="16" viewBox="0 0 16 16"><path fill="#eee" d="M0 5h3l4-4v14l-4-4H0z"/><path fill="none" stroke="#eee" stroke-width="1.600" d="M9 5q2 3 0 6M11 3q4 5 0 10"/><path fill="none" stroke="#888" stroke-width="1.400" d="M13.500 2q4 6 0 12"/></svg>
      <svg width="24" height="18" viewBox="0 0 24 18"><path fill="none" stroke="#eee" stroke-width="1.400" d="M3 5C9 0 22 0 23 6c1 5-4 8-6 9M21 14C13 18 1 18 1 11c0-2 1-4 2-5"/><text x="3.500" y="12" font-family="Lato" font-size="8.500" font-weight="700" fill="#eee">intel</text></svg>
      <b class="en">EN</b><b>17:25</b>
      <svg width="17" height="14" viewBox="0 0 17 14"><path fill="none" stroke="#eee" stroke-width="2" d="M1 1h10v8H1zM13 5h3v8H7v-2"/></svg>
    </div>
  </footer>
</div>
</body>
</html>
```
FILE: styles.css
```css
* { box-sizing: border-box; }
body { margin: 0; width: 1920px; height: 1080px; overflow: hidden; font-family: "Noto Sans", sans-serif; }
svg { flex: none; display: block; }
p, h1, h2, h3 { margin: 0; }
i, em { font-style: normal; }
.defs { display: none; }
.desktop { position: relative; width: 1920px; height: 1080px; overflow: hidden; background: #1a1a1a; }
.wallpaper { position: absolute; left: 0; top: 0; width: 1920px; height: 1080px; }
.win { position: absolute; display: flex; flex-direction: column; overflow: hidden; }
.ctl { display: flex; align-items: center; }
.ctl .mn { width: 8px; height: 1px; margin-top: 5px; background: currentColor; }
.ctl .mx { width: 8px; height: 8px; border: 1px solid currentColor; margin: 0 15px 0 20px; }

/* Browser window */
.firefox { left: 0; top: 0; width: 832px; height: 1040px; background: #fff; border-radius: 8px 8px 0 0; color: #222; }
.ff-title { flex: none; height: 32px; background: #e8e8e8; display: flex; align-items: center; padding-left: 153px; position: relative; color: #808080; font-size: 13.300px; font-weight: 600; white-space: nowrap; }
.ff-title .t { letter-spacing: -.08px; }
.ff-title .ctl { position: absolute; right: 8px; top: 7px; color: #999; }
.ff-tabs { flex: none; height: 44px; background: #e8e8e8; border-bottom: 1px solid #c4c4c4; display: flex; align-items: center; font-size: 13.300px; letter-spacing: -.2px; }
.view { width: 43px; height: 44px; border-right: 1px solid #bbb; display: flex; align-items: center; justify-content: center; padding-right: 3px; }
.tab { display: flex; align-items: center; height: 36px; }
.tab.on { width: 221px; margin-left: 4px; background: #f9f9f9; border-radius: 4px; box-shadow: 0 0 3px rgba(0,0,0,.4); padding-left: 8px; }
.tab.on .lab { width: 167px; margin-left: 5px; }
.tab.two { margin-left: 12px; }
.tab.two .lab { width: 167px; margin-left: 5px; }
.lab { overflow: hidden; white-space: nowrap; -webkit-mask-image: linear-gradient(90deg, #000 85%, transparent); mask-image: linear-gradient(90deg, #000 85%, transparent); }
.tab .x { margin-left: 2px; }
.newtab { margin-left: 23px; }
.ff-nav { flex: none; height: 42px; background: #f9f9f9; display: flex; align-items: center; padding: 0 0 1px 16px; }
.ff-nav svg, .ff-book svg { fill: none; stroke: #222; stroke-width: 1.500; }
.a1 { margin-right: 20px; } .a2 { margin-right: 20px; opacity: .4; } .a3 { margin-right: 19px; } .a4 { margin-right: 41px; }
.url { width: 472px; height: 32px; border-radius: 4px; background: #ebebeb; display: flex; align-items: center; padding: 0 8px; gap: 12px; }
.u { width: 351px; margin: 0 -5px 0 -2px; white-space: nowrap; overflow: hidden; color: #777; font-size: 14.500px; letter-spacing: -.47px; -webkit-mask-image: linear-gradient(90deg, #000 92%, transparent); mask-image: linear-gradient(90deg, #000 92%, transparent); }
.u b { font-weight: 400; color: #111; }
.a5 { margin-left: 40px; } .a6 { margin-left: 20px; }
.ff-book { flex: none; height: 27px; background: #f9f9f9; border-bottom: 1px solid #c8c8c8; display: grid; grid-template-columns: 157px 79px 107px 1fr; padding: 0 0 3px 12px; align-items: center; font-size: 13.300px; letter-spacing: -.26px; }
.ff-book span { display: flex; align-items: center; gap: 5px; white-space: nowrap; }
.page { flex: 1; min-height: 0; overflow: hidden; padding-left: 16px; }
.gh { width: 800px; height: 895px; border: solid #d1d9e0; border-width: 0 1px; }
.gh-path { height: 49px; background: #f6f8fa; border-bottom: 1px solid #d1d9e0; display: flex; align-items: center; padding: 0 0 2px 16px; font-size: 14px; }
.branch { height: 32px; width: 109px; margin: 0 7px 0 9px; border: 1px solid #d1d9e0; border-radius: 6px; display: flex; align-items: center; padding: 0 16px 0 11px; gap: 9px; background: #f6f8fa; }
.dn { border: 4px solid transparent; border-top-color: #59636e; border-bottom: 0; margin-left: auto; }
.crumb { white-space: nowrap; margin-left: -1px; }
.crumb b, .crumb a { color: #0969da; } .crumb b, .crumb strong { font-weight: 600; }
.crumb i { color: #59636e; margin: 0 4px; }
.gh-bar { height: 45px; background: #f6f8fa; border-bottom: 1px solid #d1d9e0; display: flex; align-items: center; padding: 0 0 1px 7px; font-size: 14px; }
.seg { width: 210px; height: 28px; background: #e6eaef; border-radius: 6px; display: flex; align-items: center; margin-right: 371px; }
.seg b { width: 80px; height: 30px; flex: none; line-height: 27px; border: 1px solid #818b98; border-radius: 6px; background: #fff; text-align: center; font-weight: 600; }
.cd { margin-left: 14px; width: 49px; border-right: 1px solid #d1d9e0; line-height: 14px; }
.bl { margin-left: 13px; }
.btns { height: 28px; border: 1px solid #d1d9e0; border-radius: 6px; display: flex; font-size: 12px; font-weight: 500; background: #f6f8fa; }
.btns span { width: 26px; display: flex; align-items: center; justify-content: center; border-left: 1px solid #d1d9e0; }
.btns span:first-child { border-left: 0; }
.btns .raw { width: 41px; }
.btns svg { fill: none; stroke: #25292e; stroke-width: 1.500; }
.b2 { margin-left: 8px; } .b2 .w .dn { margin: auto; border-top-color: #222; }
.md { padding: 9px 32px 0; color: #1f2328; font-size: 16px; line-height: 24px; white-space: nowrap; }
.md hr { height: 1px; border: 0; background: #d1d9e0; margin: 0 0 16px; }
.md p { margin-bottom: 16px; }
.md h1 { font-size: 32px; line-height: 40px; font-weight: 600; margin: 24px 0 16px; padding-bottom: 9.600px; border-bottom: 1px solid #d1d9e0b3; }
.md ol { margin: 0; padding-left: 32px; }
.md .rom { list-style: lower-roman; margin-bottom: 0; }
.md code { font: 13.600px/1 "Liberation Mono", monospace; padding: 3px 5.400px; background: #eff1f3; border-radius: 6px; }
.md .one { line-height: 26px; }
.md .c2 { line-height: 24.800px; }

/* Vivado window */
.vivado { left: 755px; top: 44px; width: 1161px; height: 972px; background: #fff; border-radius: 8px 8px 0 0; font: 12px "DejaVu Sans", sans-serif; letter-spacing: .25px; color: #111; box-shadow: 0 0 0 1px rgba(0,0,0,.35), 0 2px 18px rgba(0,0,0,.65); }
.v-title { flex: none; height: 32px; background: #e8e8e8; display: flex; align-items: center; padding-left: 254px; position: relative; font: 600 13.300px "Noto Sans", sans-serif; letter-spacing: -.05px; white-space: nowrap; color: #333; }
.v-title .ctl { position: absolute; right: 8px; top: 7px; color: #222; }
.v-head { flex: none; height: 57px; background: linear-gradient(#ececec, #d8d8d8); border-bottom: 1px solid #999; }
.v-menu { height: 31px; display: grid; grid-template-columns: 43px 47px 49px 55px 71px 69px 62px 52px 44px 172px 1fr; padding-left: 17px; align-items: center; }
.v-menu u { text-underline-offset: 2px; }
.qa { height: 24px; border-left: 1px solid #bbb; padding-left: 11px; display: flex; align-items: center; gap: 4px; color: #999; font-size: 11px; position: relative; bottom: 2px; }
.qa::after { content: ""; position: absolute; left: 11px; width: 142px; bottom: -1px; border-bottom: 1px solid #999; }
.v-menu em { text-align: right; padding-right: 36px; }
.v-tools { display: flex; height: 24px; align-items: center; padding-left: 9px; color: #2f4c85; }
.v-tools span { width: 34.800px; display: flex; justify-content: center; position: relative; }
.v-tools span svg, .bar svg { width: 15px; height: 15px; }
.g { color: #bababa; }
.dd::after { content: ""; position: absolute; right: 6px; bottom: -4px; border-left: 5px solid transparent; border-bottom: 5px solid #444; }
.combo { margin-left: 361px; width: 191px; height: 24px; background: #fff; border: 1px solid #b5b5b5; display: flex; align-items: center; color: #111; padding: 0 6px 0 5px; gap: 5px; font-size: 12px; letter-spacing: .12px; }
.combo svg { color: #999; } .combo .c { margin-left: auto; color: #666; }
.v-body { flex: 1; min-height: 0; display: flex; }
.v-status { flex: none; height: 19px; background: #efefef; }
.nav { width: 273px; border-right: 1px solid #999; display: flex; flex-direction: column; }
.nav h2 { flex: none; height: 27px; background: #6b6b6b; color: #fff; display: flex; align-items: center; justify-content: space-between; padding: 0 4px 1px 9px; font-size: 12px; letter-spacing: .1px; }
.nav h2 span { display: flex; gap: 7px; color: #d5d5d5; }
.nav h2 svg { width: 13px; height: 13px; }
.nav h2 svg:nth-child(-n+2) { width: 11px; height: 11px; margin: 1px; }
.nav-row { flex: 1; min-height: 0; display: flex; }
.nav-list { width: 258px; overflow: hidden; padding-top: 1px; }
.grp { margin-bottom: 19.500px; }
.grp h3 { height: 27px; margin-bottom: -2.500px; display: flex; align-items: center; font-size: 12px; font-weight: 400; letter-spacing: -.15px; padding-left: 5px; gap: 8px; }
.grp h3.b { font-weight: 700; letter-spacing: -.05px; }
.grp h3.sel { background: #cbddff; }
.grp h3 svg { width: 13px; height: 13px; }
.grp p { height: 28px; display: flex; align-items: center; padding-left: 47px; position: relative; }
.grp p svg { width: 14px; height: 14px; margin-left: -21px; margin-right: 7px; color: #2f4c85; }
.grp p.s { padding-left: 68px; }
.grp p.d { color: #999; }
.grp p svg.k { color: #333; }
.vs { flex: 1; border-left: 1px solid #e0e0e0; display: flex; flex-direction: column; align-items: center; color: #666; background: #fafafa; padding: 2px 0 0; }
.vs .up { transform: rotate(180deg); }
.vs i { width: 8px; height: 763px; border-radius: 4px; background: #c0c0c0; margin: 2px 0 auto; }
.work { flex: 1; min-width: 0; display: flex; flex-direction: column; }
.work h2 { flex: none; height: 27px; background: #cbddff; display: flex; align-items: center; font-size: 12px; font-weight: 400; padding: 0 7px 1px 12px; letter-spacing: .12px; border-left: 1px solid #fff; }
.work h2 b { letter-spacing: -.2px; }
.work h2 span { margin-left: auto; display: flex; gap: 6px; color: #888; }
.work h2 svg { width: 14px; height: 14px; }
.panes { flex: 1; min-height: 0; display: grid; grid-template-columns: 284px 571px; grid-template-rows: 340px 248px 210px; gap: 13px; padding: 10px 10px 3px 10px; }
.netlist { grid-area: 1 / 1; } .props { grid-area: 2 / 1; } .schematic { grid-area: 1 / 2 / 3 / 3; } .runs { grid-area: 3 / 1 / 4 / 3; }
.panel { min-width: 0; display: flex; flex-direction: column; border: 1px solid #c8c8c8; box-shadow: inset 0 0 0 2px #e8e8e8; padding: 2px; overflow: hidden; }
.netlist { border: 3px solid #4a7bd0; padding: 0; box-shadow: none; }
.tabs { flex: none; height: 27px; background: #ececec; display: flex; color: #8a8a8a; font-weight: 700; font-size: 12px; letter-spacing: .13px; }
.tabs > span { border-right: 2px solid #c4c4c4; height: 23px; padding: 2px 2px 0 6px; display: flex; align-items: center; justify-content: space-between; white-space: nowrap; }
.tabs > span.cut { padding-left: 0; }
.tabs > span.on { height: 27px; background: #fff; color: #111; border: 0; padding: 0 4px 2px 6px; letter-spacing: .02px; }
.tabs > span svg { width: 12px; height: 12px; margin-top: 2px; color: #999; }
.pc { margin-left: auto; display: flex; gap: 6px; align-items: center; padding-right: 7px; color: #8a8a8a; }
.pc svg, .arr svg { width: 14px; height: 14px; }
.arr { display: flex; align-items: center; gap: 2px; margin-left: 1px; }
.schematic .pc { padding-right: 7px; } .runs .pc { padding-right: 7px; padding-bottom: 1px; }
.plain { height: 27px; background: #e6e6e6; align-items: center; padding-left: 6px; color: #111; }
.bar { flex: none; height: 34px; border-bottom: 2px solid #e6e6e6; display: flex; align-items: center; color: #2f4c85; }
.bar span { width: 35px; height: 22px; border-right: 1px solid #d8d8d8; display: flex; align-items: center; justify-content: center; }
.bar span.g { color: #bababa; }
.bar .end { margin: 0 9px 0 auto; }
.bar.right { justify-content: flex-end; } .bar.right .end { margin-left: 10px; }
.bar.n { padding-left: 1px; }
.bar.n span { width: 27px; } .bar.n .w1 { width: 34.800px; } .bar.n .w2 { width: 33.500px; }
.bar.n svg { width: 15px; }
.bar a { color: #2a62e8; margin-left: 11px; width: 49px; white-space: nowrap; letter-spacing: .05px; }
.bar a + a { width: 75px; }
.bar a + a + a { width: auto; }
.tree { color: #222; position: relative; margin-top: -1px; }
.tree p { height: 21px; display: flex; align-items: center; padding-left: 6px; }
.tree p.r { padding-left: 0; }
.tree b { width: 20px; color: #ffa62b; font-size: 14px; line-height: 14px; }
.tree i { color: #888; }
.tree .k { width: 13px; height: 13px; color: #777; } .tree .f { width: 14px; height: 14px; color: #ccc; margin: 0 7px 0 2px; }
.msg { flex: 1; display: flex; align-items: center; justify-content: center; color: #8f8f8f; letter-spacing: .3px; }
.sch { width: 565px; height: 534px; }
.tr { display: grid; grid-template-columns: 109px 90px 100px 46px 42px 46px 42px 53px 52px 91px 103px 1fr; height: 22px; border-bottom: 1px solid #e0e0e0; }
.tr span { border-right: 1px solid #e0e0e0; padding: 0 0 2px 7px; display: flex; align-items: center; white-space: nowrap; overflow: hidden; }
.tr span:last-child { border-right: 0; }
.tr.h { background: #ececec; height: 21px; border-bottom: 0; letter-spacing: .06px; }
.tr.h span { padding-bottom: 0; }
.tr .k { width: 13px; height: 13px; color: #777; margin-left: -4px; margin-right: 4px; }
.tr .t { width: 15px; height: 15px; color: #aaa; margin-right: 5px; }
.tr .n2 { padding-left: 37px; }
.tr span.n1 { padding-left: 8px; }
.hs { margin-top: auto; height: 14px; border-top: 1px solid #e0e0e0; background: #fafafa; display: flex; align-items: center; color: #666; }
.hs .l { transform: rotate(180deg); margin-right: 1px; }
.hs i { width: 260px; height: 8px; border-radius: 4px; background: #c0c0c0; }
.hs .rr { margin-left: auto; }

/* Taskbar */
.taskbar { position: absolute; left: 0; right: 0; bottom: 0; height: 41px; background: #2e2e2e; border-top: 1px solid #222; display: flex; align-items: center; color: #ddd; font-size: 13.300px; font-weight: 600; }
.menu { display: flex; align-items: center; gap: 4px; padding-left: 4px; width: 92px; letter-spacing: -.2px; }
.yel { width: 28px; height: 27px; background: linear-gradient(#f9c573 88%, #d99c4a 88%); border-radius: 2px; }
.q1 { margin-left: 25px; } .q2 { margin-left: 10px; }
.task { height: 40px; display: flex; align-items: center; white-space: nowrap; }
.task.on { width: 166px; margin-left: 22px; background: #3a3a3a; border-bottom: 2px solid #1f9ede; padding-left: 8px; gap: 2px; letter-spacing: .15px; color: #e4e4e4; }
.task.two { margin-left: 16px; gap: 4px; color: #b4b4b4; letter-spacing: .28px; }
.tray { margin-left: auto; display: flex; align-items: center; gap: 10px; padding-right: 4px; }
.tray b { font-weight: 600; font-size: 13.300px; }
.tray .en { color: #4a9fdc; font-weight: 600; font-size: 14px; letter-spacing: -.5px; }
```
